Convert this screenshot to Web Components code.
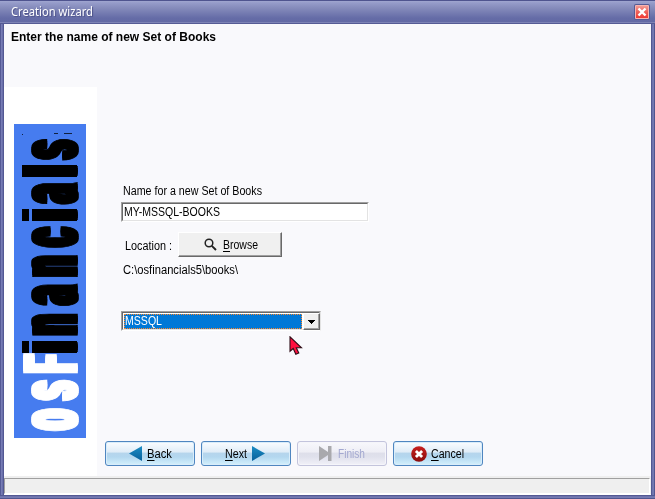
<!DOCTYPE html>
<html lang="en">
<head>
<meta charset="utf-8">
<title>Creation wizard</title>
<style>
html,body{margin:0;width:655px;height:499px;overflow:hidden}
body{font:12px/14px "Liberation Sans",sans-serif;color:#000}
</style>
</head>
<body>
<wizard-window>
  <fit-text slot="title" width="82" style="font-family:'Noto Sans','Open Sans',sans-serif;color:#fff;text-shadow:1px 1px 1px #4a4f86">Creation wizard</fit-text>
  <fit-text slot="heading" width="205" style="font-weight:bold">Enter the name of new Set of Books</fit-text>
  <brand-banner slot="side"></brand-banner>
  <books-form slot="form"></books-form>
  <wizard-button slot="actions" icon="back"><fit-text width="25"><u>B</u>ack</fit-text></wizard-button>
  <wizard-button slot="actions" icon="next"><fit-text width="22"><u>N</u>ext</fit-text></wizard-button>
  <wizard-button slot="actions" icon="finish" disabled><fit-text width="27">Finish</fit-text></wizard-button>
  <wizard-button slot="actions" icon="cancel"><fit-text width="33"><u>C</u>ancel</fit-text></wizard-button>
</wizard-window>
<script>
const define = (name, html, setup) => customElements.define(name, class extends HTMLElement {
  constructor(){ super(); this.attachShadow({mode:'open'}).innerHTML = html; }
  connectedCallback(){ if (setup) setup(this, this.shadowRoot); }
});

/* A single line of text, squeezed or widened to its "width" attribute. */
define('fit-text', `<style>
:host{display:block;height:14px;line-height:14px;white-space:nowrap}
span{display:inline-block;transform-origin:0 0}
::slotted(u){text-underline-offset:2px;text-decoration-thickness:1px}
</style><span><slot></slot></span>`, (el, root) => {
  const w = +el.getAttribute('width');
  el.style.width = w + 'px';
  const s = root.querySelector('span');
  const natural = s.getBoundingClientRect().width;
  if (natural) s.style.transform = 'scaleX(' + w / natural + ')';
});

define('close-button', `<style>
:host{display:block;width:16px;height:16px}
svg{display:block}
</style><svg width="16" height="16" viewBox="0 0 16 16">
<defs><linearGradient id="g" x2="0" y2="1"><stop offset="0" stop-color="#f29a94"/><stop offset=".5" stop-color="#f06058"/><stop offset="1" stop-color="#f03a34"/></linearGradient></defs>
<rect width="16" height="16" rx="2" fill="#565b94"/>
<rect x="1" y="1" width="14" height="14" rx="1" fill="#f8b4b0"/><rect x="2" y="2" width="12" height="12" fill="url(#g)"/>
<path d="M4.5 4.5l7 7M11.5 4.5l-7 7" stroke="#fff" stroke-width="2.4"/></svg>`);

define('brand-banner', `<style>
:host{display:block;width:72px;height:314px;background:#467cef}
svg{display:block;overflow:visible}
text{font-family:Roboto,"Liberation Sans",sans-serif;font-weight:900;stroke-width:1.6;text-anchor:middle}
.w{fill:#fff;stroke:#fff}.k{fill:#000;stroke:#000}
</style><svg width="72" height="314" viewBox="0 0 72 314">
<defs><filter id="fat" filterUnits="userSpaceOnUse" x="0" y="0" width="72" height="314" color-interpolation-filters="sRGB">
<feOffset in="SourceGraphic" dy="-1.6" result="a"/><feOffset in="SourceGraphic" dy="1.6" result="b"/>
<feMerge><feMergeNode in="a"/><feMergeNode in="b"/><feMergeNode in="SourceGraphic"/></feMerge></filter></defs>
<g filter="url(#fat)"><g transform="translate(62.6 314) rotate(-90) scale(.43 1)"><text y="0" font-size="84" x="43 111 172 211.6 264 332.6 400 467.4 518.6 568.6 621 671"><tspan class="w">os</tspan><tspan class="w" font-size="75">F</tspan><tspan class="k" font-size="70">i</tspan><tspan class="k">nanc</tspan><tspan class="k" font-size="70">i</tspan><tspan class="k">a</tspan><tspan class="k" font-size="70">l</tspan><tspan class="k">s</tspan></text></g></g>
<path d="M7 217h12v12H7zM7 85h12v12H7z" fill="#467cef"/>
<path d="M8 217h7v12H8zM18 217h45v12H18zM8 85h7v12H8zM18 85h45v12H18zM8 41h55v12H8z"/>
<path d="M8 28h0M8 10h1v1H8zM40 9h4v1h-4zM50 9h8v1h-8z" fill="#102040"/>
</svg>`);

define('text-field', `<style>
:host{display:block;box-sizing:border-box;width:248px;height:20px;background:#fff;border:1px solid;border-color:#a0a0a0 #fff #fff #a0a0a0}
div{box-sizing:border-box;height:18px;border:1px solid;border-color:#696969 #e3e3e3 #e3e3e3 #696969;padding:1px 0 0 1px}
</style><div><slot></slot></div>`);

define('browse-button', `<style>
:host{display:flex;box-sizing:border-box;width:104px;height:25px;background:#f0f0f0;border:1px solid;border-color:#fff #696969 #696969 #fff;box-shadow:inset -1px -1px #a0a0a0;align-items:center;padding-left:25px;gap:6px}
svg{display:block;flex:none}
</style><svg width="13" height="13" viewBox="0 0 13 13" fill="none" stroke="#222"><circle cx="5" cy="5" r="3.8" stroke-width="1.5"/><path d="M7.8 7.8l4.2 4.2" stroke-width="1.9"/></svg><slot></slot>`);

define('combo-box', `<style>
:host{display:block;box-sizing:border-box;width:200px;height:20px;background:#fff;border:1px solid;border-color:#a0a0a0 #e3e3e3 #fff #a0a0a0}
.in{display:flex;box-sizing:border-box;height:18px;border:1px solid;border-color:#696969 #e3e3e3 #e3e3e3 #696969;padding:1px 0 0 1px}
.sel{flex:none;box-sizing:border-box;width:178px;height:15px;color:#fff;background:#0078d7;outline:1px dotted #ff8728;outline-offset:-1px;padding:0 0 0 1px;margin-right:1px}
.drop{flex:none;display:grid;place-items:center;box-sizing:border-box;width:17px;height:17px;margin-top:-1px;background:#f0f0f0;border:1px solid;border-color:#fff #696969 #696969 #fff;box-shadow:inset -1px -1px #a0a0a0}
svg{display:block}
</style><div class="in"><div class="sel"><slot></slot></div><div class="drop"><svg width="7" height="4" shape-rendering="crispEdges"><path d="M0 0h7v1H6v1H5v1H4v1H3V3H2V2H1V1H0z"/></svg></div></div>`);

define('mouse-pointer', `<style>
:host{display:block;position:absolute;left:289px;top:336px;width:14px;height:20px}
</style><svg width="14" height="20" viewBox="0 0 14 20"><path d="M1 .8v14.4l3.2-2.7 2.6 5.8 3-1.3-2.5-5.2h5.2z" fill="#ff1040" stroke="#301018" stroke-width="1.1"/></svg>`);

define('books-form', `<style>
:host{display:flex;flex-direction:column;padding:97px 0 0 24px}
.pad{padding-left:2px}
.loc{display:flex;gap:6px;padding:10px 0 0 4px}
.loc>:first-child{margin-top:7px}
.path{padding:6px 0 34px 2px}
text-field{margin-top:4px}
</style>
<fit-text class="pad" width="139">Name for a new Set of Books</fit-text>
<text-field><fit-text width="96">MY-MSSQL-BOOKS</fit-text></text-field>
<div class="loc"><fit-text width="47">Location :</fit-text><browse-button><fit-text width="35"><u>B</u>rowse</fit-text></browse-button></div>
<div class="path"><fit-text width="115">C:\\osfinancials5\\books\\</fit-text></div>
<combo-box><fit-text width="37">MSSQL</fit-text></combo-box>
<mouse-pointer></mouse-pointer>`);

const icons = {
  back:'<svg width="13" height="15"><path d="M0 7.5L13 0v15z" fill="url(#b)"/><defs><linearGradient id="b" x2="0" y2="1"><stop stop-color="#1c8dc4"/><stop offset="1" stop-color="#07609b"/></linearGradient></defs></svg>',
  next:'<svg width="13" height="15"><path d="M13 7.5L0 0v15z" fill="url(#b)"/><defs><linearGradient id="b" x2="0" y2="1"><stop stop-color="#1c8dc4"/><stop offset="1" stop-color="#07609b"/></linearGradient></defs></svg>',
  finish:'<svg width="13" height="15"><path d="M0 0l9 6V0h3.5v15H9V9l-9 6z" fill="#a9a9ad"/></svg>',
  cancel:'<svg width="16" height="16"><defs><linearGradient id="r" x2="0" y2="1"><stop stop-color="#c8201e"/><stop offset="1" stop-color="#8a0c0c"/></linearGradient></defs><circle cx="8" cy="8" r="7.8" fill="url(#r)"/><path d="M4.9 4.9l6.2 6.2M11.1 4.9l-6.2 6.2" stroke="#fff" stroke-width="2.8"/></svg>'
};
define('wizard-button', `<style>
:host{display:flex;box-sizing:border-box;width:90px;height:25px;align-items:center;border:1px solid #4f86c0;border-radius:3px;box-shadow:inset 0 0 0 1px #d9edfa;background:linear-gradient(#fafdff 0,#dfecf7 44%,#b5d5ec 48%,#b3d7ef 65%,#d4f1fd 100%)}
:host([disabled]){border-color:#c3c4dc;color:#a3a8d0;box-shadow:inset 0 0 0 1px #f5f5fa;background:linear-gradient(#f8f8fc 0,#eeeef5 44%,#dedfea 48%,#e0e1ec 65%,#f1f1f8 100%)}
:host([icon=back]){padding-left:23px;gap:5px}
:host([icon=next]){padding-left:23px;gap:5px}
:host([icon=next]) .i{order:2}
:host([icon=finish]){padding-left:21px;gap:6px}
:host([icon=cancel]){padding-left:17px;gap:4px}
svg{display:block}
</style><span class="i"></span><slot></slot>`, (el, root) => {
  root.querySelector('.i').innerHTML = icons[el.getAttribute('icon')];
});

define('wizard-window', `<style>
:host{display:grid;box-sizing:border-box;width:655px;height:499px;grid-template-rows:24px 63px 389px 19px 4px;grid-template-columns:4px 93px 1fr 4px;
 background:linear-gradient(90deg,#555a96 0,#555a96 1px,#777cb5 1px,#777cb5 2px,#6a70aa 2px,#6a70aa 3px,#535893 3px,#535893 652px,#6a70aa 652px,#777cb5 654px,#50558f 654px)}
header{grid-area:1/1/2/5;display:flex;justify-content:space-between;padding:5px 5px 0 11px;box-sizing:border-box;background:linear-gradient(#4f548f 0,#4f548f 1px,#a0a6d0 1px,#959bc9 3px,#858bbb 8px,#656ca7 18px,#636aa5 22px,#7d83b5 22px,#7d83b5 23px,#555b95 23px)}
close-button{margin-top:-1px}
.head{grid-area:2/2/3/4;background:#f9f9fc;padding:6px 0 0 7px}
.side{grid-area:3/2;background:#fff;padding:37px 0 0 10px}
.main{grid-area:3/3;background:#f9f9fc;display:grid;grid-template-rows:354px 35px}
.actions{display:flex;gap:6px;padding-left:8px}
.status{grid-area:4/2/5/4;background:#efefef;border:2px solid #efefef;border-width:2px 0 1px;border-bottom-color:#fff;box-sizing:border-box;padding-right:1px}
.status i{display:block;box-sizing:border-box;height:16px;border:1px solid #a0a0a0;border-right-color:#fff;border-bottom-color:#fff}
.foot{grid-area:5/1/6/5;background:linear-gradient(#535893 0,#535893 1px,#6a70aa 1px,#777cb5 3px,#50558f 3px)}
</style>
<header><slot name="title"></slot><close-button></close-button></header>
<div class="head"><slot name="heading"></slot></div>
<div class="side"><slot name="side"></slot></div>
<div class="main"><slot name="form"></slot><div class="actions"><slot name="actions"></slot></div></div>
<div class="status"><i></i></div><div class="foot"></div>`);
</script>
</body>
</html>
